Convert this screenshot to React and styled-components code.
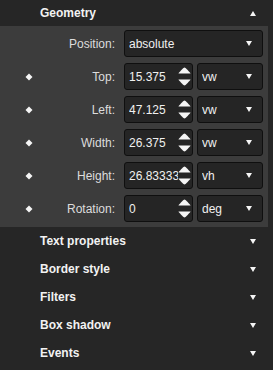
import React from "react";
import styled, { createGlobalStyle } from "styled-components";

const GlobalStyle = createGlobalStyle`
    html, body {
        margin: 0;
        padding: 0;
        background: #262626;
        font-family: "Liberation Sans", Arial, sans-serif;
    }
`;

const Sidebar = styled.div`
    width: 273px;
    height: 370px;
    background: #262626;
    overflow: hidden;
`;

const SectionHeader = styled.div`
    width: 268px;
    height: ${(props) => (props.open ? "26px" : "28px")};
    display: flex;
    align-items: center;
    padding: 0 12px 0 40px;
    box-sizing: border-box;
    color: #f2f2f2;
    font-size: 12px;
    font-weight: bold;

    .title {
        flex: 1;
    }
`;

const Panel = styled.div`
    width: 268px;
    background: #3c3c3c;
    padding: 4px 0 5px;
    box-sizing: border-box;
    display: flex;
    flex-direction: column;
    gap: 6px;
`;

const Row = styled.div`
    display: grid;
    grid-template-columns: 58px 66px 139px;
    height: 27px;
    align-items: center;

    .diamond {
        display: flex;
        justify-content: center;
    }

    .label {
        grid-column: 2;
        text-align: right;
        color: #dcdcdc;
        font-size: 12px;
        padding-right: 9px;
        white-space: nowrap;
        margin-left: -50px;
    }
`;

const Controls = styled.div`
    display: flex;
    gap: 4px;
    height: 27px;
`;

const Box = styled.div`
    box-sizing: border-box;
    height: 27px;
    width: ${(props) => props.width}px;
    background: #252525;
    border: 1px solid #0f0f0f;
    border-radius: 3px;
    display: flex;
    align-items: center;
    padding: 0 ${(props) => (props.spin ? 1 : 10)}px 0 4px;
    color: #f0f0f0;
    font-size: 12px;

    .value {
        flex: 1;
        overflow: hidden;
        white-space: nowrap;
    }
`;

const Arrow = ({ up }) => (
    <svg width="6" height="5" viewBox="0 0 6 5">
        {up ? (
            <path d="M3 0 L6 5 L0 5 Z" fill="#f5f5f5" />
        ) : (
            <path d="M0 0 L6 0 L3 5 Z" fill="#f5f5f5" />
        )}
    </svg>
);

const Spinner = () => (
    <svg width="13" height="19" viewBox="0 0 13 19">
        <path d="M6.5 0.5 C7.5 0.5 12.5 6 12.5 6.5 L0.5 6.5 C0.5 6 5.5 0.5 6.5 0.5 Z" fill="#f5f5f5" />
        <path d="M0.5 12.5 L12.5 12.5 C12.5 13 7.5 18.5 6.5 18.5 C5.5 18.5 0.5 13 0.5 12.5 Z" fill="#f5f5f5" />
    </svg>
);

const Diamond = () => (
    <svg width="8" height="8" viewBox="0 0 8 8">
        <path d="M4 0.5 L7.5 4 L4 7.5 L0.5 4 Z" fill="#f5f5f5" />
    </svg>
);

const Select = ({ value, width }) => (
    <Box width={width}>
        <span className="value">{value}</span>
        <Arrow />
    </Box>
);

const NumberInput = ({ value }) => (
    <Box width={69} spin>
        <span className="value">{value}</span>
        <Spinner />
    </Box>
);

const fields = [
    { label: "Top:", value: "15.375", unit: "vw" },
    { label: "Left:", value: "47.125", unit: "vw" },
    { label: "Width:", value: "26.375", unit: "vw" },
    { label: "Height:", value: "26.83333", unit: "vh" },
    { label: "Rotation:", value: "0", unit: "deg" },
];

const sections = ["Text properties", "Border style", "Filters", "Box shadow", "Events"];

const App = () => {
    return (
        <Sidebar>
            <GlobalStyle />
            <SectionHeader open>
                <span className="title">Geometry</span>
                <Arrow up />
            </SectionHeader>
            <Panel>
                <Row>
                    <span />
                    <span className="label">Position:</span>
                    <Select value="absolute" width={139} />
                </Row>
                {fields.map((f) => (
                    <Row key={f.label}>
                        <span className="diamond">
                            <Diamond />
                        </span>
                        <span className="label">{f.label}</span>
                        <Controls>
                            <NumberInput value={f.value} />
                            <Select value={f.unit} width={66} />
                        </Controls>
                    </Row>
                ))}
            </Panel>
            {sections.map((s) => (
                <SectionHeader key={s}>
                    <span className="title">{s}</span>
                    <Arrow />
                </SectionHeader>
            ))}
        </Sidebar>
    );
};

export default App;
